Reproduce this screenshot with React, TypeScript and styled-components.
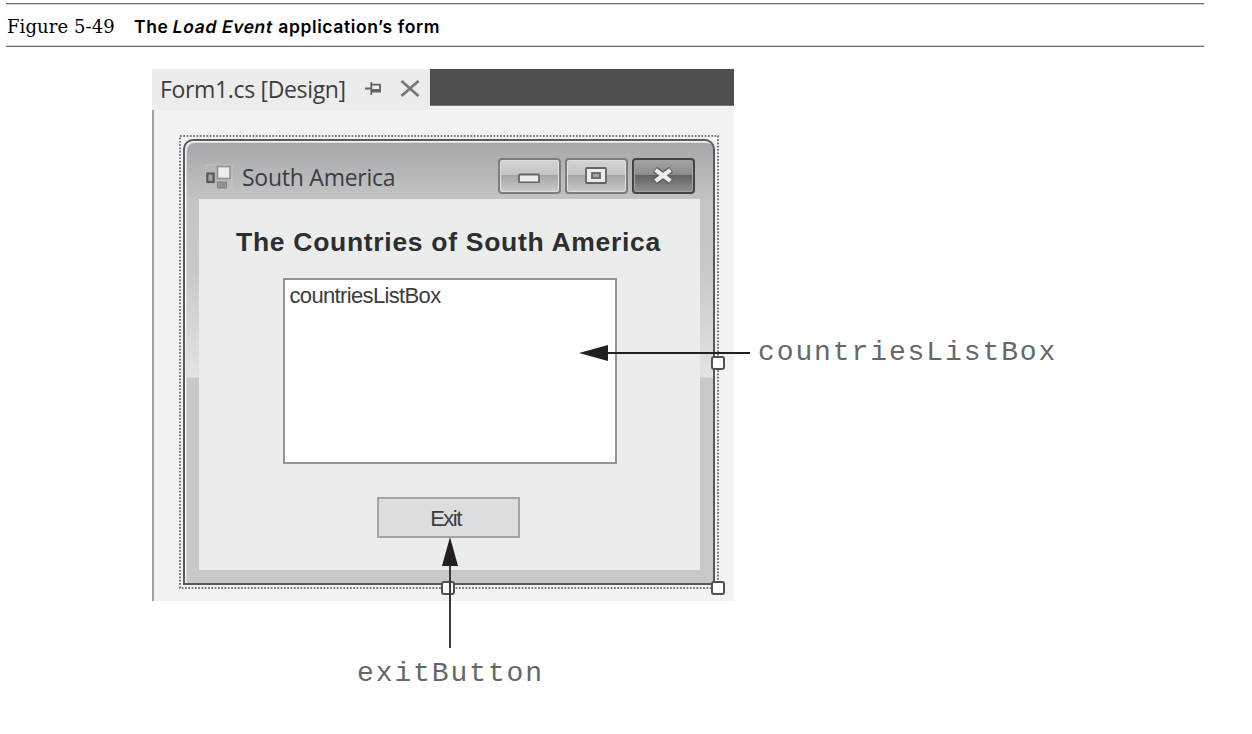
import React from "react";
import styled, { createGlobalStyle } from "styled-components";

const Global = createGlobalStyle`
  * { box-sizing: border-box; }
  html, body { margin: 0; background: #fff; }
`;

const Page = styled.div`
  position: relative;
  width: 1252px;
  height: 734px;
  padding: 3px 0 0 6px;
  overflow: hidden;
  background: #fff;
`;

const Caption = styled.header`
  display: flex;
  align-items: center;
  width: 1198px;
  height: 44px;
  padding-top: 4px;
  border-top: 1px solid #6f6f6f;
  border-bottom: 1px solid #6f6f6f;
  box-shadow: inset 0 1px #d4d4d4, inset 0 -1px #d4d4d4;
  color: #000;
  white-space: nowrap;
`;

const FigureNumber = styled.span`
  width: 128px;
  padding-left: 1px;
  font: 18px/24px "DejaVu Serif", serif;
  letter-spacing: 0.1px;
`;

const FigureTitle = styled.h1`
  margin: 0;
  font: 600 17.5px/24px Inter, sans-serif;
  letter-spacing: 0.6px;
`;

const Slanted = styled.em`
  display: inline-block;
  font-style: normal;
  transform: skewX(-11deg);
`;

const Designer = styled.main`
  display: flex;
  flex-direction: column;
  width: 582px;
  height: 532px;
  margin: 22px 0 0 146px;
  background: #f2f2f3;
`;

const TabStrip = styled.div`
  display: flex;
  align-items: flex-start;
  height: 41px;
`;

const Tab = styled.div`
  display: flex;
  align-items: center;
  width: 278px;
  height: 41px;
  padding: 0 0 2px 8px;
  background: #ececed;
`;

const StripRest = styled.div`
  flex: 1;
  height: 37px;
  background: #4d4e50;
  border-bottom: 1px solid #77787a;
`;

const TabText = styled.span`
  width: 205px;
  font: 23px/36px "Open Sans", sans-serif;
  letter-spacing: -0.34px;
  white-space: nowrap;
  color: #3c3d3f;
`;

const Surface = styled.div`
  flex: 1;
  padding: 25px 15px 10px 25px;
  border-left: 2px solid #a0a1a3;
`;

const Selection = styled.div`
  position: relative;
  width: 540px;
  height: 456px;
  padding: 4px;
`;

const SelectionDots = styled.svg`
  position: absolute;
  inset: 0;
`;

const Window = styled.section`
  display: flex;
  flex-direction: column;
  position: relative;
  width: 532px;
  height: 446px;
  border: 2px solid #58595b;
  border-radius: 10px 10px 0 0;
  box-shadow: inset 1px 1px #f4f4f5, inset 2px 2px #dcdddf;
  background:
    linear-gradient(#a6a7aa, #c3c4c6 60px, #c7c8ca 130px, #e2e3e5 236px, #c7c8ca 237px, #c7c8ca);
`;

const TitleBar = styled.div`
  display: flex;
  align-items: flex-start;
  height: 58px;
  padding: 17px 18px 0 20px;
`;

const AppIconSlot = styled.span`
  display: flex;
  padding-top: 6px;
`;

const TitleText = styled.span`
  flex: 1;
  padding-left: 9px;
  font: 23px/38px "Open Sans", sans-serif;
  letter-spacing: -0.25px;
  white-space: nowrap;
  color: #3c3d3f;
`;

const Buttons = styled.div`
  display: flex;
  gap: 4px;
`;

const CaptionButton = styled.button<{ $dark?: boolean }>`
  display: flex;
  align-items: center;
  justify-content: center;
  width: 63px;
  height: 36px;
  padding: 0 2px 0 0;
  border: 2px solid ${(p) => (p.$dark ? "#434446" : "#7b7c7f")};
  border-radius: 4px;
  box-shadow: inset 0 0 0 1px ${(p) => (p.$dark ? "#a2a3a5" : "#dedfe0")};
  background: ${(p) =>
    p.$dark
      ? "linear-gradient(#a3a4a6, #8a8b8e 47%, #626366 48%, #8f9092)"
      : "linear-gradient(#d2d3d5, #c3c4c6 47%, #a4a5a8 48%, #cbccce)"};
`;

const Client = styled.div`
  display: flex;
  flex-direction: column;
  align-items: center;
  width: 501px;
  height: 371px;
  margin-left: 14px;
  background: #ebeded;
`;

const FormHeading = styled.h2`
  margin: 26px 2px 0 0;
  font: bold 26.5px/34px "Liberation Sans", sans-serif;
  letter-spacing: 0.7px;
  white-space: nowrap;
  color: #2d2e30;
`;

const ListBox = styled.div`
  width: 334px;
  height: 186px;
  margin-top: 19px;
  padding: 2px 5px;
  border: 2px solid #939497;
  background: #fff;
  font: 22px/28px "Liberation Sans", sans-serif;
  letter-spacing: -0.65px;
  color: #3c3d3f;
`;

const ExitButton = styled.button`
  width: 143px;
  height: 41px;
  margin: 33px 2px 0 0;
  padding: 3px 6px 0 0;
  border: 2px solid #a3a4a7;
  background: #dcdddf;
  font: 22px/34px "Liberation Sans", sans-serif;
  letter-spacing: -1.5px;
  color: #3c3d3f;
`;

const Handle = styled.i<{ $x: number; $y: number }>`
  position: absolute;
  left: ${(p) => p.$x}px;
  top: ${(p) => p.$y}px;
  width: 14px;
  height: 14px;
  border: 2px solid #505153;
  border-radius: 3px;
  background: #fff;
`;

const Arrow = styled.svg<{ $x: number; $y: number }>`
  position: absolute;
  left: ${(p) => p.$x}px;
  top: ${(p) => p.$y}px;
`;

const Callout = styled.span<{ $x: number; $y: number }>`
  position: absolute;
  left: ${(p) => p.$x}px;
  top: ${(p) => p.$y}px;
  font: 28px/34px "Liberation Mono", monospace;
  letter-spacing: 1.9px;
  white-space: nowrap;
  color: #66676a;
`;

const PinIcon = () => (
  <svg width="17" height="15" viewBox="0 0 17 15" fill="none" stroke="#626366" strokeWidth="1.8">
    <path d="M0 7.5H6M6.3 1V14M6.3 3.6H15V10.5H6.3M6.3 9H15" />
  </svg>
);

const CloseMark = styled.svg`
  margin-left: 18px;
`;

const CloseIcon = () => (
  <CloseMark width="20" height="17" viewBox="0 0 20 17" fill="none" stroke="#77787a" strokeWidth="2.8">
    <path d="M1.5 1L18.5 16M18.5 1L1.5 16" />
  </CloseMark>
);

const AppIcon = () => (
  <svg width="28" height="28" viewBox="0 0 28 28">
    <rect x="1" y="1" width="26" height="25" fill="none" stroke="#c4c5c7" strokeWidth="1" />
    <rect x="12.5" y="2.5" width="12.5" height="12" fill="#ececed" stroke="#8f9092" strokeWidth="1.6" />
    <rect x="2.3" y="9.5" width="6.4" height="8.5" fill="#a4a5a8" stroke="#58595b" strokeWidth="2.2" />
    <rect x="12.5" y="18" width="9" height="6" fill="#8f9092" stroke="#808184" />
  </svg>
);

export default function App() {
  return (
    <Page>
      <Global />
      <Caption>
        <FigureNumber>Figure 5-49</FigureNumber>
        <FigureTitle>
          The <Slanted>Load Event</Slanted> application’s form
        </FigureTitle>
      </Caption>
      <Designer>
        <TabStrip>
          <Tab>
            <TabText>Form1.cs [Design]</TabText>
            <PinIcon />
            <CloseIcon />
          </Tab>
          <StripRest />
        </TabStrip>
        <Surface>
          <Selection>
            <SelectionDots width="540" height="456" fill="none" stroke="#77787a" strokeWidth="2" strokeDasharray="1.7 1.6">
              <rect x="1" y="1" width="538" height="452" />
            </SelectionDots>
            <Window>
              <TitleBar>
                <AppIconSlot>
                  <AppIcon />
                </AppIconSlot>
                <TitleText>South America</TitleText>
                <Buttons>
                  <CaptionButton aria-label="Minimize">
                    <svg width="24" height="14" viewBox="0 0 24 14">
                      <rect x="2" y="5.5" width="20" height="8" rx="1" fill="#ececed" stroke="#636466" strokeWidth="1.8" />
                    </svg>
                  </CaptionButton>
                  <CaptionButton aria-label="Maximize">
                    <svg width="22" height="18" viewBox="0 0 22 18">
                      <rect x="1" y="1" width="20" height="15" rx="1" fill="#ececed" stroke="#636466" strokeWidth="1.8" />
                      <rect x="7" y="6" width="8" height="5" fill="#a4a5a8" stroke="#636466" strokeWidth="1.8" />
                    </svg>
                  </CaptionButton>
                  <CaptionButton $dark aria-label="Close">
                    <svg width="24" height="20" viewBox="0 0 24 20" fill="none">
                      <path d="M4 3.5L20 15.5M20 3.5L4 15.5" stroke="#58595b" strokeWidth="7" />
                      <path d="M4.5 4L19.5 15M19.5 4L4.5 15" stroke="#ececed" strokeWidth="4.4" />
                    </svg>
                  </CaptionButton>
                </Buttons>
              </TitleBar>
              <Client>
                <FormHeading>The Countries of South America</FormHeading>
                <ListBox>countriesListBox</ListBox>
                <ExitButton>Exit</ExitButton>
              </Client>
            </Window>
          </Selection>
        </Surface>
      </Designer>
      <Handle $x={711} $y={356} />
      <Handle $x={711} $y={581} />
      <Handle $x={441} $y={581} />
      <Arrow $x={578} $y={343} width="174" height="20" viewBox="0 0 174 20">
        <path d="M28 10H172" stroke="#231f20" strokeWidth="2" />
        <path d="M1 10L30 2V18Z" fill="#231f20" />
      </Arrow>
      <Arrow $x={440} $y={537} width="20" height="112" viewBox="0 0 20 112">
        <path d="M10 26V111" stroke="#3a3839" strokeWidth="2" />
        <path d="M10 0L18 29H2Z" fill="#231f20" />
      </Arrow>
      <Callout $x={758} $y={336}>countriesListBox</Callout>
      <Callout $x={357} $y={657}>exitButton</Callout>
    </Page>
  );
}
